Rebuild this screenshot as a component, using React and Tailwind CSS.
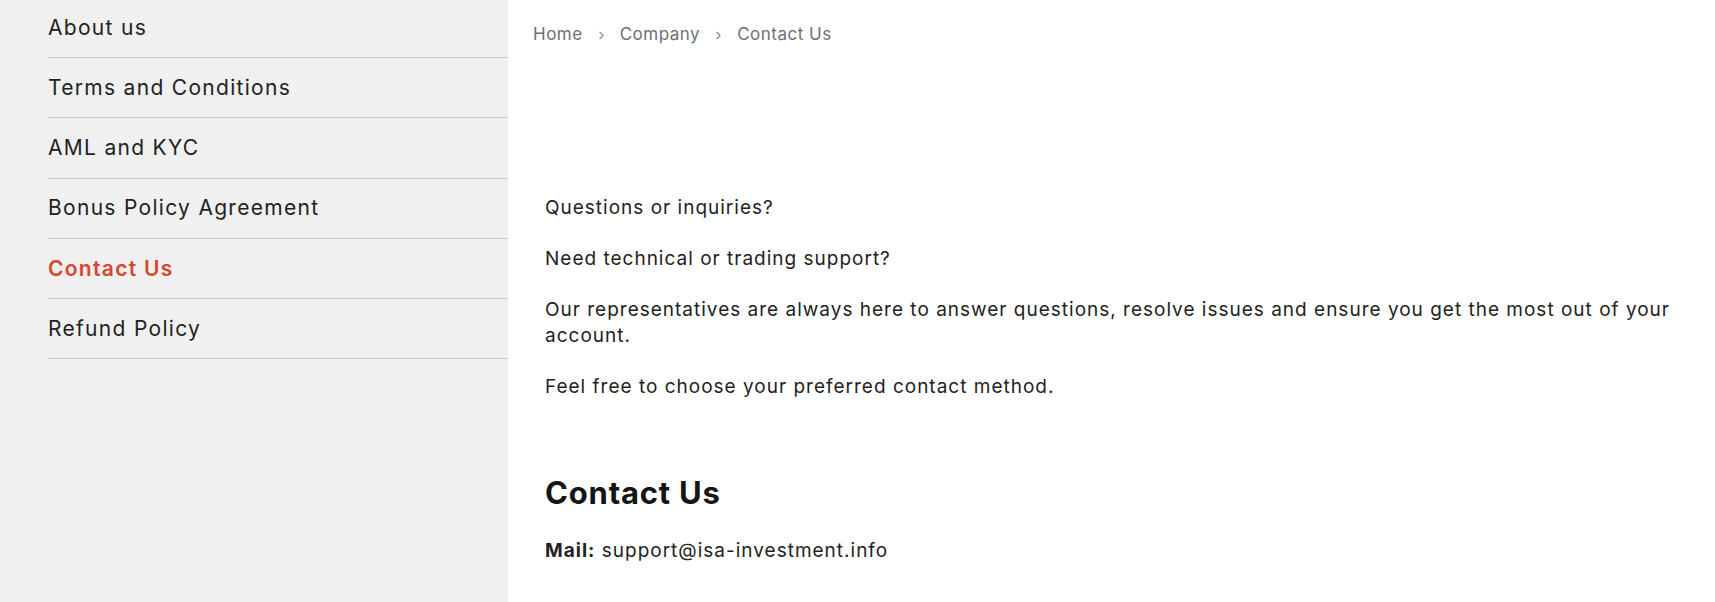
import React from 'react';
import { ChevronRight } from 'lucide-react';

const menu = [
  { label: 'About us' },
  { label: 'Terms and Conditions' },
  { label: 'AML and KYC' },
  { label: 'Bonus Policy Agreement' },
  { label: 'Contact Us', active: true },
  { label: 'Refund Policy' },
];

const Sidebar = () => (
  <aside className="w-[508px] shrink-0 bg-[#f0f0f0] pl-12">
    <ul className="-mt-[2px]">
      {menu.map((item) => (
        <li
          key={item.label}
          className={`flex h-[60.2px] items-center border-b border-[#cacaca] text-[21px] tracking-[1.3px] ${
            item.active ? 'font-semibold text-[#d7452f]' : 'text-[#222]'
          }`}
        >
          {item.label}
        </li>
      ))}
    </ul>
  </aside>
);

const Breadcrumb = () => (
  <nav className="flex h-[70px] items-center gap-3 text-[17px] tracking-[0.5px] text-[#6e6e7a]">
    <span>Home</span>
    <ChevronRight size={13} className="text-[#888]" />
    <span>Company</span>
    <ChevronRight size={13} className="text-[#888]" />
    <span>Contact Us</span>
  </nav>
);

export default function App() {
  return (
    <div className="flex h-[602px] w-full overflow-hidden bg-white font-['Inter',sans-serif]">
      <Sidebar />
      <main className="flex-1 pl-[25px] pr-6">
        <Breadcrumb />
        <div className="pl-[12px] pt-[125px] text-[19px] leading-[26px] tracking-[1px] text-[#222]">
          <p>Questions or inquiries?</p>
          <p className="mt-[25px]">Need technical or trading support?</p>
          <p className="mt-[25px] max-w-[1130px]">
            Our representatives are always here to answer questions, resolve issues and ensure you get the most out of your account.
          </p>
          <p className="mt-[25px]">Feel free to choose your preferred contact method.</p>
          <h2 className="mt-[73px] text-[31px] font-bold leading-[40px] tracking-[0.8px] text-[#151515]">Contact Us</h2>
          <p className="mt-[25px]">
            <span className="font-bold">Mail:</span> support@isa-investment.info
          </p>
        </div>
      </main>
    </div>
  );
}
